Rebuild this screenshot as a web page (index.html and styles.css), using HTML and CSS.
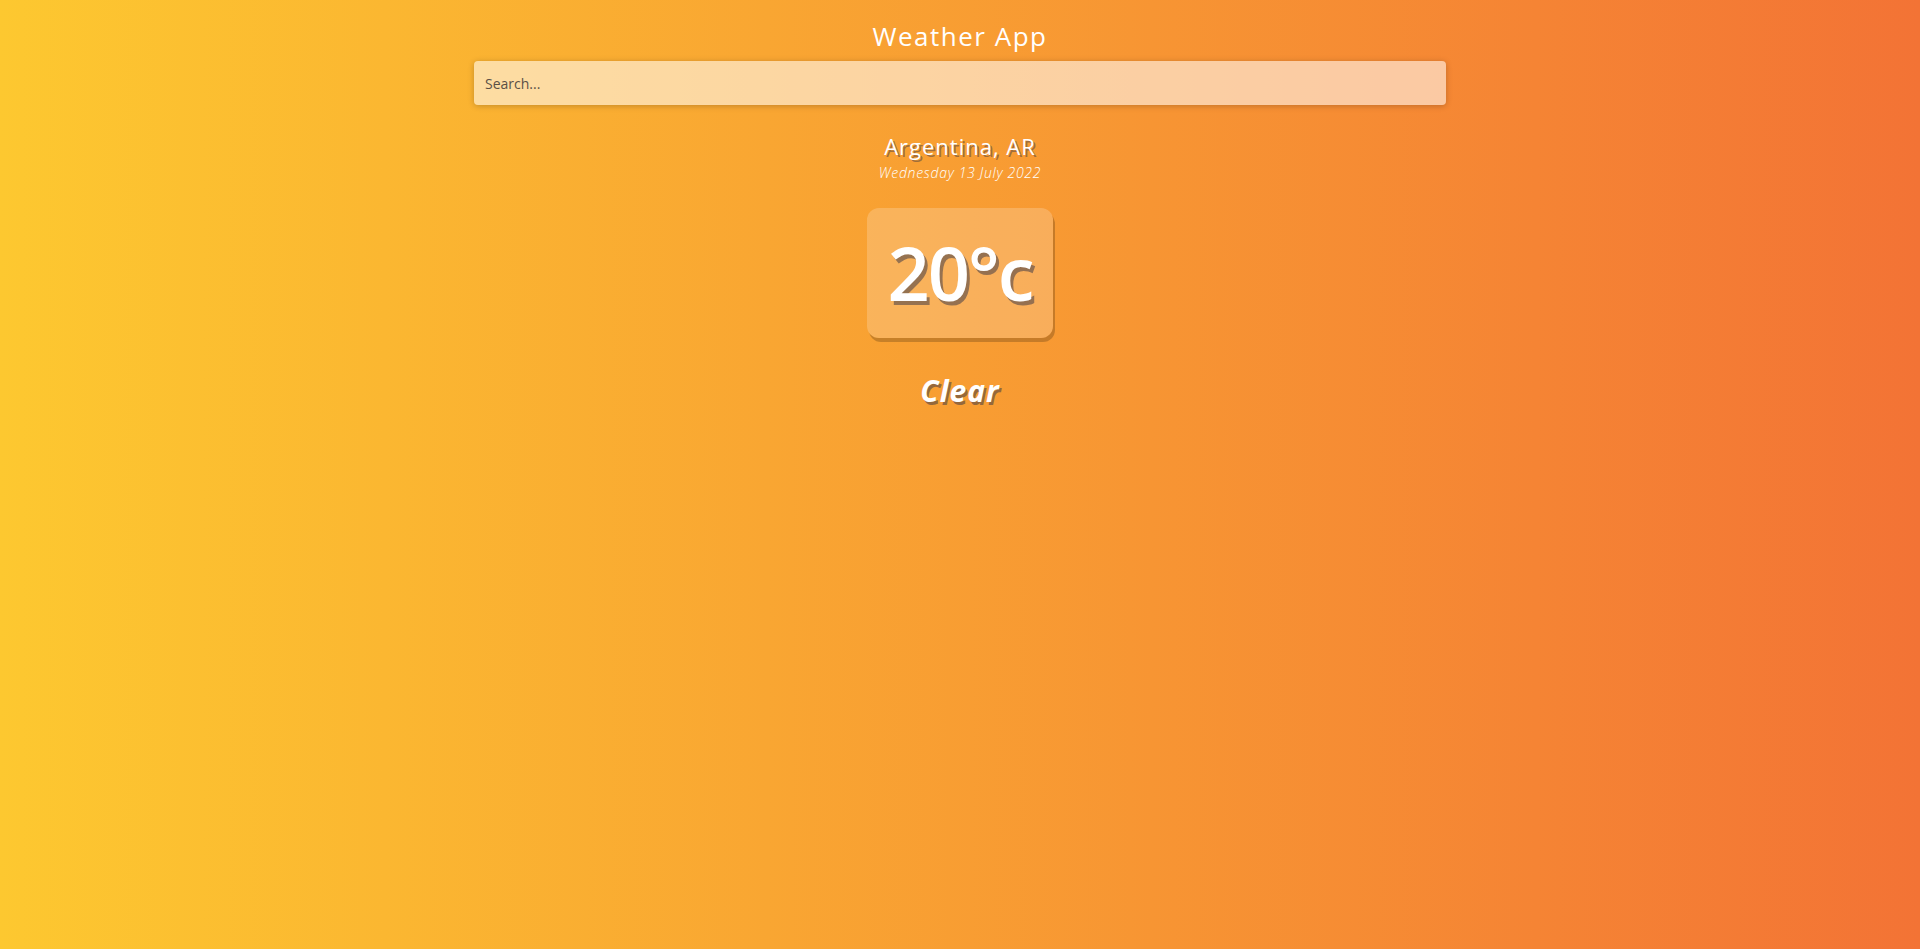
FILE: index.html
```
<!DOCTYPE html>
<html lang="en">
<head>
<meta charset="utf-8">
<title>Weather App</title>
<link rel="stylesheet" href="styles.css">
</head>
<body>
<main class="app">
  <h1 class="title">Weather App</h1>
  <div class="search-box">
    <input class="search-bar" type="text" placeholder="Search...">
  </div>
  <section class="location-box">
    <div class="location">Argentina, AR</div>
    <div class="date">Wednesday 13 July 2022</div>
  </section>
  <section class="weather-box">
    <div class="temp">20°c</div>
    <div class="weather">Clear</div>
  </section>
</main>
</body>
</html>
```

FILE: styles.css
```
* {
  box-sizing: border-box;
}

html, body {
  margin: 0;
  padding: 0;
}

body {
  min-height: 100vh;
  background: linear-gradient(to right, #fdc830, #f37335);
  font-family: "Open Sans", "Noto Sans", sans-serif;
  color: #fff;
}

.app {
  width: 972px;
  margin: 0 auto;
  padding-top: 20px;
  display: flex;
  flex-direction: column;
  align-items: center;
}

.title {
  margin: 0;
  font-size: 26px;
  font-weight: 400;
  letter-spacing: 1.5px;
  line-height: 32px;
  text-align: center;
}

.search-box {
  width: 100%;
  margin-top: 9px;
}

.search-bar {
  display: block;
  width: 100%;
  height: 44px;
  padding: 0 11px;
  border: none;
  outline: none;
  border-radius: 4px;
  background-color: rgba(255, 255, 255, 0.55);
  box-shadow: 0 1px 6px rgba(0, 0, 0, 0.22);
  font-family: "Open Sans", "Noto Sans", sans-serif;
  font-size: 14px;
  color: #313131;
}

.search-bar::placeholder {
  color: #5a5046;
}

.location-box {
  margin-top: 27px;
  display: flex;
  flex-direction: column;
  align-items: center;
  gap: 2px;
}

.location {
  font-size: 22px;
  font-weight: 400;
  letter-spacing: 1px;
  line-height: 28px;
  text-shadow: 2px 2px rgba(50, 50, 70, 0.45);
}

.date {
  font-size: 14px;
  font-style: italic;
  font-weight: 300;
  letter-spacing: 0.7px;
  line-height: 22px;
}

.weather-box {
  display: flex;
  flex-direction: column;
  align-items: center;
}

.temp {
  margin-top: 24px;
  width: 186px;
  height: 130px;
  display: flex;
  align-items: center;
  justify-content: center;
  background-color: rgba(255, 255, 255, 0.2);
  border-radius: 12px;
  box-shadow: 2px 4px rgba(0, 0, 0, 0.2);
  font-size: 74px;
  font-weight: 600;
  letter-spacing: -2px;
  line-height: 1;
  text-shadow: 3px 4px rgba(50, 50, 70, 0.5);
}

.weather {
  margin-top: 34px;
  font-size: 30px;
  font-weight: 700;
  font-style: italic;
  letter-spacing: 1px;
  line-height: 38px;
  text-shadow: 2px 3px rgba(50, 50, 70, 0.5);
}
```
